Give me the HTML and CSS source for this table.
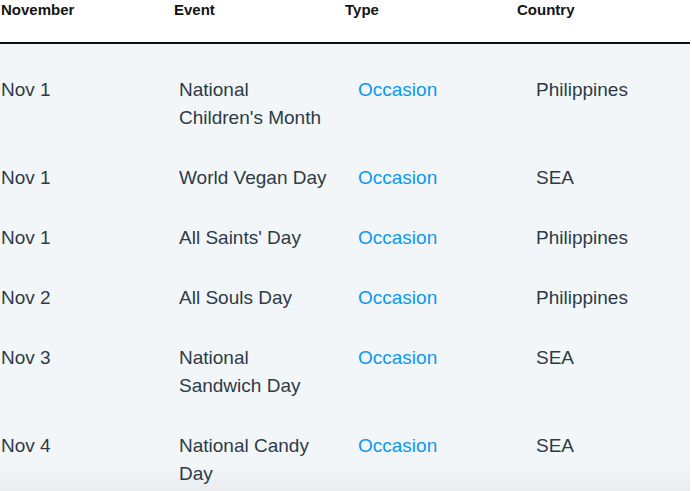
FILE: index.html
```html
<!DOCTYPE html>
<html lang="en">
<head>
<meta charset="utf-8">
<title>November events</title>
<link rel="stylesheet" href="styles.css">
</head>
<body>
<div class="table">
  <div class="head">
    <div class="hcell">November</div>
    <div class="hcell">Event</div>
    <div class="hcell">Type</div>
    <div class="hcell">Country</div>
  </div>
  <div class="rows">
    <div class="row">
      <div class="cell">Nov 1</div>
      <div class="cell event">National Children's Month</div>
      <div class="cell type">Occasion</div>
      <div class="cell">Philippines</div>
    </div>
    <div class="row">
      <div class="cell">Nov 1</div>
      <div class="cell event">World Vegan Day</div>
      <div class="cell type">Occasion</div>
      <div class="cell">SEA</div>
    </div>
    <div class="row">
      <div class="cell">Nov 1</div>
      <div class="cell event">All Saints' Day</div>
      <div class="cell type">Occasion</div>
      <div class="cell">Philippines</div>
    </div>
    <div class="row">
      <div class="cell">Nov 2</div>
      <div class="cell event">All Souls Day</div>
      <div class="cell type">Occasion</div>
      <div class="cell">Philippines</div>
    </div>
    <div class="row">
      <div class="cell">Nov 3</div>
      <div class="cell event">National Sandwich Day</div>
      <div class="cell type">Occasion</div>
      <div class="cell">SEA</div>
    </div>
    <div class="row">
      <div class="cell">Nov 4</div>
      <div class="cell event">National Candy Day</div>
      <div class="cell type">Occasion</div>
      <div class="cell">SEA</div>
    </div>
  </div>
</div>
</body>
</html>
```
FILE: styles.css
```css
html, body {
  margin: 0;
  padding: 0;
  background: #ffffff;
  overflow: hidden;
}
body {
  font-family: "Liberation Sans", Arial, Helvetica, sans-serif;
}
.table {
  width: 690px;
}
.head {
  display: grid;
  grid-template-columns: 173px 171px 172px 1fr;
  padding-bottom: 22px;
  border-bottom: 2px solid #111111;
}
.hcell {
  padding-left: 1px;
  font-size: 15px;
  font-weight: bold;
  line-height: 20px;
  color: #141414;
}
.rows {
  padding-top: 16px;
  background: linear-gradient(to bottom, #f3f6f9 0, #f3f6f9 420px, #e9edf0 447px);
  min-height: 460px;
}
.row {
  display: grid;
  grid-template-columns: 178px 179px 178px 1fr;
  padding: 16px 0;
}
.cell {
  padding-left: 1px;
  font-size: 19px;
  line-height: 28px;
  color: #2d3b45;
}
.event {
  padding-right: 24px;
}
.type {
  color: #0a98f0;
}
```
